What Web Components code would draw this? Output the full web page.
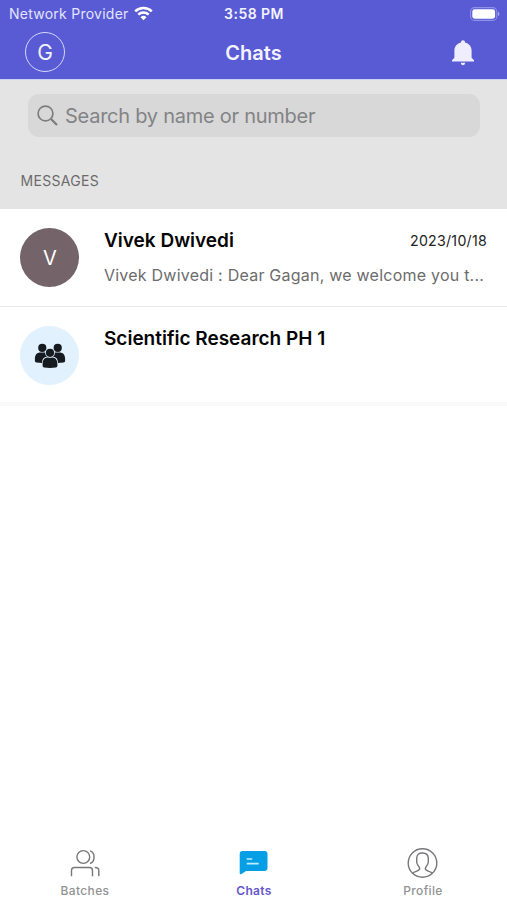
<!DOCTYPE html>
<html lang="en">
<head>
<meta charset="utf-8">
<meta name="viewport" content="width=device-width, initial-scale=1">
<title>Chats</title>
<style>
  body {
    margin: 0;
    background: #fff;
    font-family: Inter, "Liberation Sans", sans-serif;
  }
</style>
</head>
<body>
<chat-app>
  <status-bar slot="top" carrier="Network Provider" time="3:58 PM"></status-bar>
  <nav-header slot="top" initial="G">Chats</nav-header>
  <search-panel placeholder="Search by name or number">MESSAGES</search-panel>
  <chat-row date="2023/10/18">
    <chat-avatar slot="avatar">V</chat-avatar>
    Vivek Dwivedi
    <span slot="preview">Vivek Dwivedi : Dear Gagan, we welcome you t...</span>
  </chat-row>
  <chat-row last>
    <chat-avatar slot="avatar" group></chat-avatar>
    Scientific Research PH 1
  </chat-row>
  <tab-bar slot="bottom">
    <tab-item icon="batches">Batches</tab-item>
    <tab-item icon="chats" active>Chats</tab-item>
    <tab-item icon="profile">Profile</tab-item>
  </tab-bar>
</chat-app>

<script>
class ChatApp extends HTMLElement {
    constructor() {
        super();
        this.attachShadow({ mode: 'open' });
        this.shadowRoot.innerHTML = `
      <style>
        :host {
          display: flex;
          flex-direction: column;
          height: 100vh;
          overflow: hidden;
        }
        header {
          background: #595bd4;
          color: #f2f3ff;
          height: 79px;
          border-bottom: 1px solid #cdd1f3;
        }
        main {
          flex: 1;
          min-height: 0;
        }
      </style>
      <header><slot name="top"></slot></header>
      <main><slot></slot></main>
      <slot name="bottom"></slot>
    `;
    }
}

class StatusBar extends HTMLElement {
    connectedCallback() {
        if (!this.shadowRoot) this.attachShadow({ mode: 'open' });
        this.shadowRoot.innerHTML = `
      <style>
        :host {
          display: grid;
          grid-template-columns: 1fr auto 1fr;
          align-items: center;
          height: 27px;
          padding: 0 7px 0 9px;
          font-size: 14px;
          line-height: 27px;
        }
        .carrier {
          display: flex;
          align-items: center;
          gap: 5px;
          letter-spacing: 0.25px;
          color: #e2e4ff;
        }
        .carrier span,
        .time {
          padding-top: 1px;
          line-height: 26px;
        }
        .time {
          margin-left: -1px;
          font-weight: 600;
          letter-spacing: 0.45px;
        }
        .battery {
          justify-self: end;
        }
        svg {
          display: block;
        }
      </style>
      <div class="carrier">
        <span>${this.getAttribute('carrier')}</span>
        <svg width="19" height="15" viewBox="0 0 19 15" fill="none" stroke="#fff" stroke-width="2.5">
          <path d="M1.2 5.4a11.8 11.8 0 0 1 16.6 0M4.3 8.7a7.4 7.4 0 0 1 10.4 0"/>
          <path d="M9.5 14.2 6.5 11.2a4.3 4.3 0 0 1 6 0z" fill="#fff" stroke="none"/>
        </svg>
      </div>
      <span class="time">${this.getAttribute('time')}</span>
      <svg class="battery" width="30" height="14" viewBox="0 0 30 14">
        <rect x="0.6" y="0.6" width="26.2" height="12.8" rx="4" fill="none" stroke="#8f91e8" stroke-width="1.1"/>
        <rect x="2.3" y="2.3" width="22.8" height="9.4" rx="2.4" fill="#fff"/>
        <path d="M28 4.8a2.4 2.4 0 0 1 0 4.4z" fill="#a6a8f0"/>
      </svg>
    `;
    }
}

class NavHeader extends HTMLElement {
    connectedCallback() {
        if (!this.shadowRoot) this.attachShadow({ mode: 'open' });
        this.shadowRoot.innerHTML = `
      <style>
        :host {
          display: grid;
          grid-template-columns: 1fr auto 1fr;
          align-items: center;
          height: 50px;
          padding: 0 32px 0 25px;
        }
        .initial {
          box-sizing: border-box;
          width: 40px;
          height: 40px;
          border: 1.5px solid #d5d8ff;
          border-radius: 50%;
          font-size: 21px;
          line-height: 39px;
          text-align: center;
        }
        .title {
          margin-left: 7px;
          padding-top: 2px;
          font-size: 20px;
          font-weight: 600;
          line-height: 48px;
        }
        .bell {
          display: block;
          justify-self: end;
          margin-top: 2px;
        }
      </style>
      <div class="initial">${this.getAttribute('initial')}</div>
      <div class="title"><slot></slot></div>
      <svg class="bell" width="24" height="28" viewBox="0 0 24 28" fill="#eeeeff">
        <path d="M12 1.2c1.2 0 2 .8 2 1.9v.5c3.9.9 6.6 4 6.6 8.1v7.1l2.4 2.5v1.2H1v-1.2l2.4-2.5v-7.1c0-4.1 2.7-7.2 6.6-8.1v-.5c0-1.1.8-1.9 2-1.9z"/>
        <path d="M9.8 23.8h4.4a2.2 2.4 0 0 1-4.4 0z"/>
      </svg>
    `;
    }
}

class SearchPanel extends HTMLElement {
    connectedCallback() {
        if (!this.shadowRoot) this.attachShadow({ mode: 'open' });
        this.shadowRoot.innerHTML = `
      <style>
        :host {
          display: block;
          box-sizing: border-box;
          height: 129px;
          padding: 14px 27px 0 28px;
          background: #e4e4e4;
        }
        .field {
          display: flex;
          align-items: center;
          gap: 7px;
          height: 43px;
          padding-left: 9px;
          border-radius: 11px;
          background: #d8d8d8;
          color: #838386;
          font-size: 20px;
          line-height: 43px;
          letter-spacing: -0.25px;
        }
        .field span {
          padding-top: 2px;
        }
        .label {
          margin: 34px 0 0 -7.5px;
          color: #6b6b6b;
          font-size: 14px;
          line-height: 20px;
          letter-spacing: 0.3px;
        }
      </style>
      <div class="field">
        <svg width="21" height="21" viewBox="0 0 21 21" fill="none" stroke="#7d7d80">
          <circle cx="8.5" cy="8.5" r="7.4" stroke-width="1.7"/>
          <path d="m14 14 6 6" stroke-width="2.3"/>
        </svg>
        <span>${this.getAttribute('placeholder')}</span>
      </div>
      <div class="label"><slot></slot></div>
    `;
    }
}

class ChatAvatar extends HTMLElement {
    connectedCallback() {
        if (!this.shadowRoot) this.attachShadow({ mode: 'open' });
        const person = `
          <path d="M-7.4 5.4V3.2c0-4.2 2.2-6.2 5.6-6.200h3.600c3.400 0 5.600 2 5.600 6.200v2.200q0 1.400-1.600 1.700-5.800.8-11.600 0-1.600-.3-1.600-1.700z"/>
          <circle cx="0" cy="-7.600" r="4.100"/>`;

        this.shadowRoot.innerHTML = `
      <style>
        :host {
          display: flex;
          align-items: center;
          justify-content: center;
          width: 59px;
          height: 59px;
          border-radius: 50%;
          background: #74646a;
          color: #fff;
          font-size: 20px;
        }
        :host([group]) {
          background: #e1f1fd;
        }
      </style>
      ${this.hasAttribute('group') ? `
      <svg width="32" height="28" viewBox="0 0 32 28" fill="#151b1f">
        <g transform="translate(8.3 13.5)">${person}</g>
        <g transform="translate(23.7 13.5)">${person}</g>
        <g transform="translate(16 18.400)" stroke="#e1f1fd" stroke-width="1.600" paint-order="stroke">${person}</g>
      </svg>` : '<slot></slot>'}
    `;
    }
}

class ChatRow extends HTMLElement {
    connectedCallback() {
        if (!this.shadowRoot) this.attachShadow({ mode: 'open' });
        this.shadowRoot.innerHTML = `
      <style>
        :host {
          display: flex;
          box-sizing: border-box;
          gap: 24.6px;
          height: 98px;
          padding: 19px 20px 0 20.4px;
          border-bottom: 1px solid #e9e9e9;
          background: #fff;
        }
        :host([last]) {
          height: 99px;
          border-bottom: 4px solid #f9f9f9;
        }
        .body {
          flex: 1;
          min-width: 0;
        }
        .head {
          display: flex;
          align-items: center;
          justify-content: space-between;
          height: 24px;
        }
        .name {
          color: #050505;
          font-size: 19px;
          font-weight: 600;
          letter-spacing: 0;
        }
        .date {
          color: #222;
          font-size: 14.2px;
          letter-spacing: 0.25px;
        }
        .preview {
          height: 24px;
          margin-top: 11px;
          color: #6c6c6c;
          font-size: 16px;
          line-height: 24px;
          letter-spacing: 0.23px;
          white-space: nowrap;
        }
      </style>
      <slot name="avatar"></slot>
      <div class="body">
        <div class="head">
          <span class="name"><slot></slot></span>
          <span class="date">${this.getAttribute('date') || ''}</span>
        </div>
        <div class="preview"><slot name="preview"></slot></div>
      </div>
    `;
    }
}

const tabIcons = {
    batches: `
      <g fill="none" stroke="#77777a" stroke-width="1.4">
        <circle cx="14.3" cy="9" r="6.4"/>
        <path d="M21 2.9c5.4 1.8 5.4 10.8 0 12.6M2.5 28.2v-5.7q0-3 3-3h15q3 0 3 3v5.7M25.8 19.5q4 0 4 3v5.7"/>
      </g>`,
    chats: `
      <path d="M4.5 3h22q3 0 3 3v14q0 3-3 3H8l-4.8 3.2q-1.5.5-1.5-1.2V6q0-3 2.8-3z" fill="#069fe6"/>
      <path d="M8.7 11h5.5M8.7 15.6h12" stroke="#c4edff" stroke-width="1.7"/>`,
    profile: `
      <g fill="none" stroke="#77777a" stroke-width="1.4">
        <circle cx="15.5" cy="15" r="14.3"/>
        <path d="M5.8 25.3c1.4-2.3 6.7-1.9 6.9-4.7.1-2.3-3-3.200-3-6.600v-3.600c0-3.900 2.100-5.400 5.800-5.400s5.800 1.500 5.800 5.400v3.600c0 3.400-3.100 4.300-3 6.600.2 2.800 5.500 2.400 6.900 4.700"/>
      </g>`
};

class TabItem extends HTMLElement {
    connectedCallback() {
        if (!this.shadowRoot) this.attachShadow({ mode: 'open' });
        this.shadowRoot.innerHTML = `
      <style>
        :host {
          display: flex;
          flex: 1;
          flex-direction: column;
          align-items: center;
          gap: 5px;
          color: #929294;
          font-size: 12px;
          font-weight: 500;
          line-height: 16px;
          letter-spacing: 0.35px;
        }
        :host([active]) {
          color: #6557c9;
          font-weight: 600;
        }
        span {
          padding-left: 1px;
        }
      </style>
      <svg width="31" height="30" viewBox="0 0 31 30">${tabIcons[this.getAttribute('icon')]}</svg>
      <span><slot></slot></span>
    `;
    }
}

class TabBar extends HTMLElement {
    constructor() {
        super();
        this.attachShadow({ mode: 'open' });
        this.shadowRoot.innerHTML = `
      <style>
        :host {
          display: flex;
          height: 52px;
          background: #fff;
        }
      </style>
      <slot></slot>
    `;
    }
}

customElements.define('chat-app', ChatApp);
customElements.define('status-bar', StatusBar);
customElements.define('nav-header', NavHeader);
customElements.define('search-panel', SearchPanel);
customElements.define('chat-avatar', ChatAvatar);
customElements.define('chat-row', ChatRow);
customElements.define('tab-item', TabItem);
customElements.define('tab-bar', TabBar);
</script>
</body>
</html>
